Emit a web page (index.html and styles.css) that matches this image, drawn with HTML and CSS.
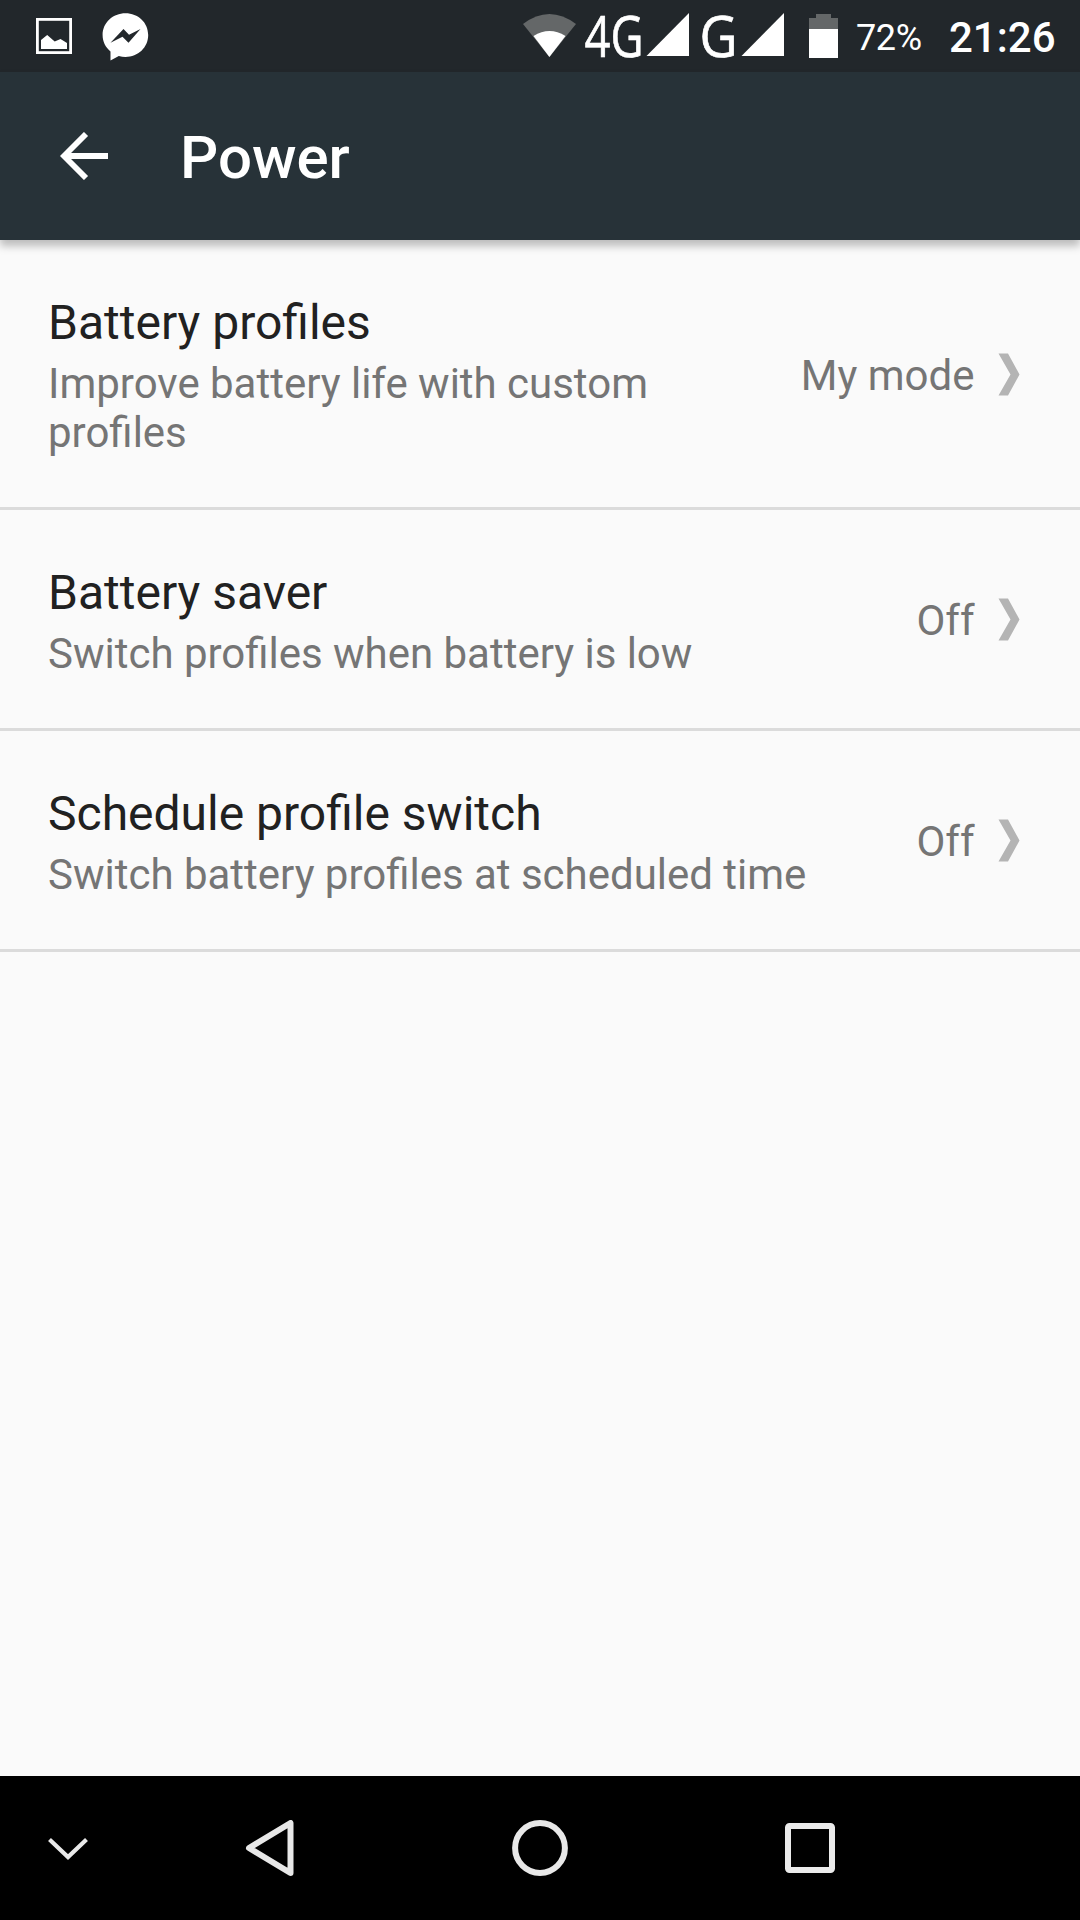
FILE: index.html
```html
<!DOCTYPE html>
<html lang="en">
<head>
<meta charset="utf-8">
<title>Power</title>
<link rel="stylesheet" href="styles.css">
</head>
<body>
<div class="screen">
  <div class="status">
    <svg class="icon-picture" width="36" height="36" viewBox="0 0 36 36"><rect x="1.4" y="1.4" width="33.2" height="33.2" fill="none" stroke="#fff" stroke-width="2.800"/><path d="M5 31V22L11.2 17L18.700 23.500L24.500 21L31 25V31Z" fill="#fff"/></svg>
    <svg class="icon-messenger" width="48" height="48" viewBox="0 0 48 48"><path d="M23.500 .3C11 .3 .6 9.700 .6 22c0 6.500 2.900 12.400 7.900 16.400V47.500L16.800 43c2.200.6 4.400.9 6.700.9C36 43.900 46.200 34.500 46.200 22S36 .3 23.500 .3Z" fill="#fff"/><path d="M8.500 29.800L21.500 16L27 21.800L38.500 16L26.500 29.800L20.500 23.800Z" fill="#22272b"/></svg>
    <div class="indicators">
      <svg class="icon-signals" width="276" height="72" viewBox="0 0 276 72">
        <path d="M3 24Q29.300 4 56 24L29.400 57Z" fill="#646768"/>
        <path d="M13.500 36Q29.500 26 45.500 36L29.400 57Z" fill="#fff"/>
        <text class="net" x="64.500" y="57" textLength="59" lengthAdjust="spacingAndGlyphs">4G</text>
        <path d="M126.500 56L169 13V56Z" fill="#fff"/>
        <text class="net" x="179.500" y="56.500" textLength="38" lengthAdjust="spacingAndGlyphs">G</text>
        <path d="M221.500 56L264 13V56Z" fill="#fff"/>
      </svg>
      <svg class="icon-battery" width="29" height="44" viewBox="0 0 29 44"><path d="M7 0H22V4H29V15H0V4H7Z" fill="#646768"/><path d="M0 15H29V44H0Z" fill="#fff"/></svg>
      <span class="percent">72%</span>
      <span class="clock">21:26</span>
    </div>
  </div>
  <header class="appbar">
    <svg width="48" height="48" viewBox="0 0 48 48"><path d="M26 2L4 24L26 46M4 24H48" fill="none" stroke="#fff" stroke-width="5.800"/></svg>
    <h1>Power</h1>
  </header>
  <main class="list">
    <div class="row wraps">
      <div class="label"><div class="title">Battery profiles</div><div class="summary">Improve battery life with custom profiles</div></div>
      <div class="value">My mode</div>
      <svg class="chevron" width="22" height="43" viewBox="0 0 22 43"><path d="M.5.500H10L21.500 21.500L10 42.500H.5L12.500 21.500Z" fill="#b4b4b4"/></svg>
    </div>
    <div class="row">
      <div class="label"><div class="title">Battery saver</div><div class="summary">Switch profiles when battery is low</div></div>
      <div class="value">Off</div>
      <svg class="chevron" width="22" height="43" viewBox="0 0 22 43"><path d="M.5.500H10L21.500 21.500L10 42.500H.5L12.500 21.500Z" fill="#b4b4b4"/></svg>
    </div>
    <div class="row">
      <div class="label"><div class="title">Schedule profile switch</div><div class="summary">Switch battery profiles at scheduled time</div></div>
      <div class="value">Off</div>
      <svg class="chevron" width="22" height="43" viewBox="0 0 22 43"><path d="M.5.500H10L21.500 21.500L10 42.500H.5L12.500 21.500Z" fill="#b4b4b4"/></svg>
    </div>
  </main>
  <nav class="navbar">
    <svg width="42" height="24" viewBox="0 0 42 24"><path d="M2.500 2.500L21 20L39.500 2.500" fill="none" stroke="#e9e9e9" stroke-width="4.200"/></svg>
    <svg width="50" height="56" viewBox="0 0 50 56"><path d="M45.500 3V53L4 28Z" fill="none" stroke="#e8e8e8" stroke-width="6" stroke-linejoin="round"/></svg>
    <svg width="56" height="56" viewBox="0 0 56 56"><circle cx="28" cy="28" r="24.900" fill="none" stroke="#e8e8e8" stroke-width="6"/></svg>
    <svg width="50" height="50" viewBox="0 0 50 50"><rect x="3" y="3" width="44" height="44" rx="1.500" fill="none" stroke="#ebebeb" stroke-width="6"/></svg>
  </nav>
</div>
</body>
</html>
```
FILE: styles.css
```css
body {
  margin: 0;
  font-family: Roboto, sans-serif;
}
svg {
  display: block;
  flex: none;
}
.screen {
  display: flex;
  flex-direction: column;
  width: 1080px;
  height: 1920px;
  background: #fafafa;
}
.status {
  display: flex;
  align-items: flex-start;
  height: 72px;
  background: #22272b;
  color: #fff;
}
.icon-picture { margin: 18px 0 0 36px; }
.icon-messenger { margin: 13px 0 0 30px; }
.indicators {
  display: flex;
  margin-left: 370px;
}
.icon-signals { overflow: visible; }
.net {
  font-family: "Open Sans", sans-serif;
  font-size: 56px;
  fill: #fff;
  stroke: #fff;
  stroke-width: 0.7px;
}
.icon-battery { margin: 14px 0 0 13px; }
.percent {
  width: 66px;
  margin: 17px 0 0 18px;
  font-size: 36px;
  line-height: 42px;
  letter-spacing: -0.4px;
}
.clock {
  margin: 13px 0 0 27px;
  font-size: 42px;
  font-weight: 500;
  line-height: 50px;
}
.appbar {
  display: flex;
  align-items: center;
  gap: 72px;
  height: 168px;
  padding-left: 60px;
  background: #273238;
  box-shadow: 0 6px 8px rgba(0, 0, 0, 0.25);
  color: #fff;
}
.appbar h1 {
  margin: 4px 0 0;
  font-size: 60px;
  font-weight: 500;
  line-height: 70px;
}
.list { flex: 1; }
.row {
  display: flex;
  align-items: center;
  padding: 55px 60px 50px 48px;
  border-bottom: 3px solid #dbdbdb;
}
.label { flex: none; }
.wraps .label { width: 660px; }
.title {
  margin-bottom: 8px;
  color: #212121;
  font-size: 48px;
  line-height: 56px;
}
.summary {
  color: #757575;
  font-size: 42px;
  line-height: 49px;
  word-spacing: -0.1px;
}
.value {
  flex: 1;
  margin-bottom: 2px;
  color: #757575;
  font-size: 42px;
  line-height: 49px;
  text-align: right;
}
.wraps .value { margin-bottom: 1px; }
.chevron { margin: 0 0 4px 23.5px; }
.navbar {
  display: flex;
  align-items: center;
  height: 144px;
  background: #000;
}
.navbar svg:nth-child(1) { margin: 2px 0 0 47px; }
.navbar svg:nth-child(2) { margin-left: 156px; }
.navbar svg:nth-child(3) { margin-left: 217px; }
.navbar svg:nth-child(4) { margin-left: 217px; }
```
